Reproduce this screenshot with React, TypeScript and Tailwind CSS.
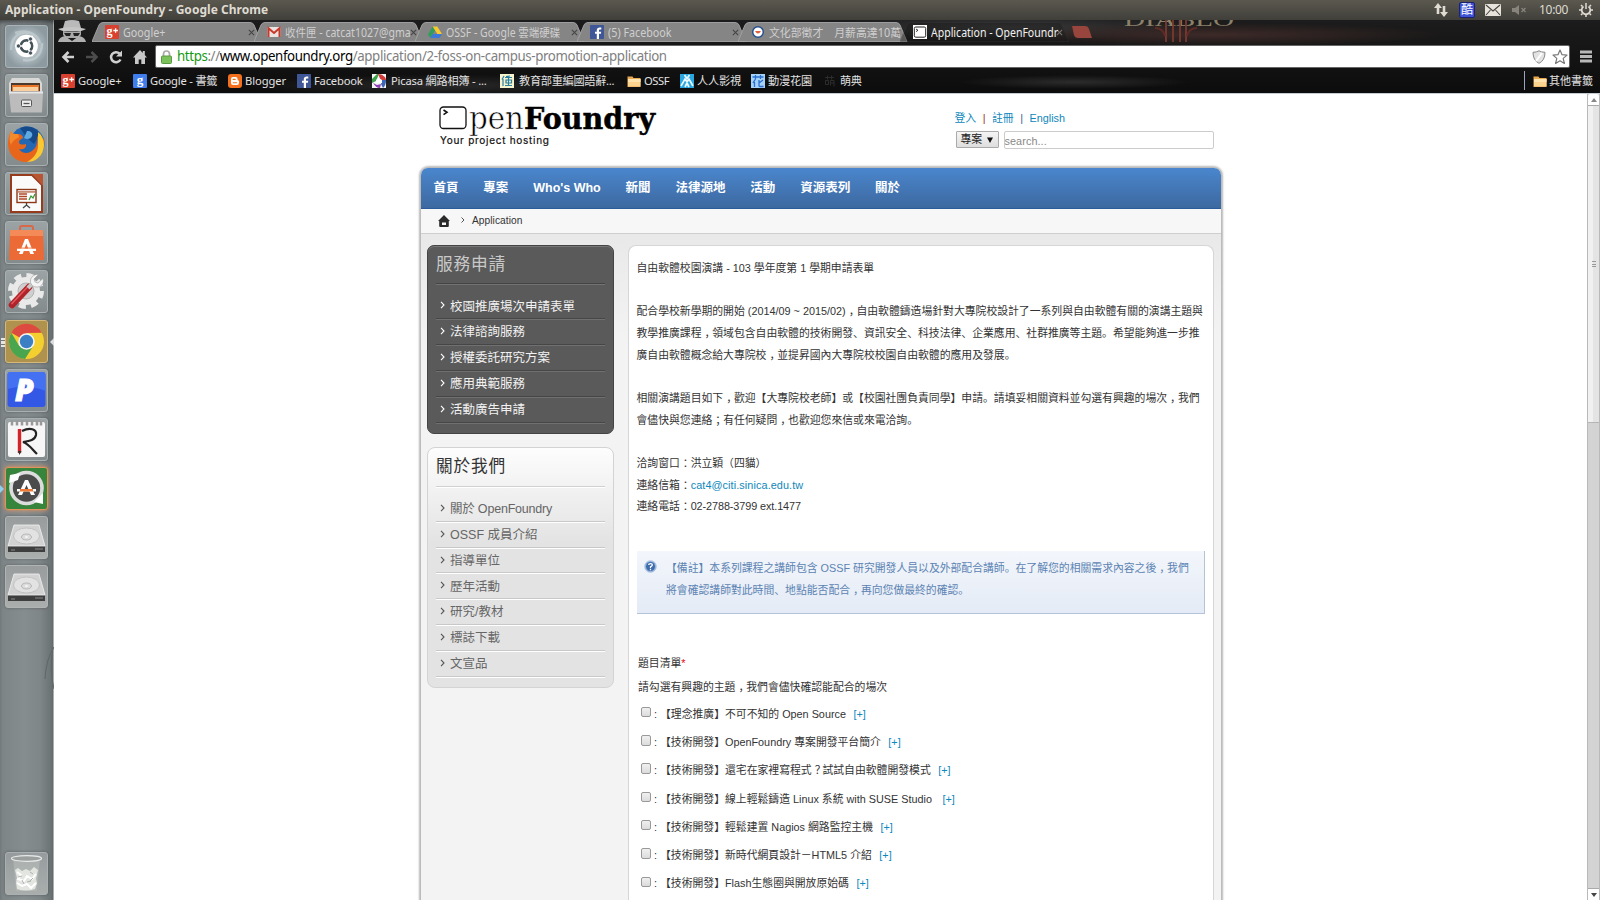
import React from "react";

const UI = "font-['Noto_Sans','Noto_Sans_CJK_SC',sans-serif]";

/* ---------- small favicons ---------- */
const GPlus = () => (
  <svg viewBox="0 0 14 14" className="size-[14px] shrink-0">
    <rect width="14" height="14" rx="1" fill="#d8412f" />
    <text x="1.4" y="10" fontSize="12" fontWeight="700" fill="#fff" fontFamily="Liberation Serif">g</text>
    <path d="M8.300 5.500h4.600M10.600 3.200v4.600" stroke="#fff" strokeWidth="1.3" />
  </svg>
);
const GBlue = () => (
  <svg viewBox="0 0 14 14" className="size-[14px] shrink-0">
    <rect width="14" height="14" rx="1" fill="#3f7ded" />
    <text x="3.8" y="10.2" fontSize="13" fontWeight="700" fill="#fff" fontFamily="Liberation Serif">g</text>
  </svg>
);
const BloggerIcon = () => (
  <svg viewBox="0 0 14 14" className="size-[14px] shrink-0">
    <rect width="14" height="14" rx="3" fill="#f4701c" />
    <path d="M5 3h2.6a2 2 0 0 1 2 2v.8c0 .5.3.6.8.7.5 0 .6.3.6.7V9a2 2 0 0 1-2 2H5a2 2 0 0 1-2-2V5a2 2 0 0 1 2-2z" fill="#fff" />
    <path d="M5.2 5.4h2M5.2 8.7h3.4" stroke="#f4701c" strokeWidth="1.1" strokeLinecap="round" />
  </svg>
);
const Fb = () => (
  <svg viewBox="0 0 14 14" className="size-[14px] shrink-0">
    <rect width="14" height="14" rx=".5" fill="#3f5797" />
    <path d="M9 14V8.8h1.9l.3-2.1H9V5.4c0-.7.3-1 1.1-1h1.2V2.5c-.3 0-.9-.1-1.6-.1C8 2.400 6.800 3.400 6.800 5.100v1.600H5v2.100h1.800V14z" fill="#fff" />
  </svg>
);
const Picasa = () => (
  <svg viewBox="0 0 14 14" className="size-[14px] shrink-0">
    <rect width="14" height="14" fill="#f5f5f5" />
    <path d="M0 5 5 0h2L4 7 0 9z" fill="#3da04b" />
    <path d="M6 0c4 0 8 3 8 6L9 7z" fill="#d33a3a" />
    <path d="M14 6c0 4-1 6-3 8l-2-4 1-4z" fill="#3d66b8" />
    <path d="M1 9c2 3 4 5 7 5l1-4-4 1z" fill="#8c3fb0" />
    <path d="M4 6 7 4l3 2v3H4z" fill="#fff" />
  </svg>
);
const EduIcon = () => (
  <svg viewBox="0 0 14 14" className="size-[14px] shrink-0">
    <rect width="14" height="14" fill="#f6f3cf" />
    <path d="M5 3.500h7M8.500 2v9.500M5 11.500h7M6 6h5.500v3H6zM4 2 2 5.500M3 5v7M10 2 6 2.500" stroke="#2b7fa0" strokeWidth="1.200" fill="none" />
  </svg>
);
const FolderIcon = () => (
  <svg viewBox="0 0 14 14" className="size-[14px] shrink-0">
    <path d="M.5 2.500h5l1 1.500h7v9H.5z" fill="#e9a750" />
    <path d="M1 5h12.500v7.500H1z" fill="#fbd38f" />
    <path d="M1 5h12.500v3H1z" fill="#ffe3ae" />
  </svg>
);
const RenRen = () => (
  <svg viewBox="0 0 14 14" className="size-[14px] shrink-0">
    <rect width="14" height="14" fill="#2aa7e0" />
    <path d="M4.500 1 7 4.500 9.500 1M1 12l4-7 2 3 2-3 4 7M5 13l2-4 2 4" stroke="#e9f8ff" strokeWidth="1.700" fill="none" />
  </svg>
);
const Flower = () => (
  <svg viewBox="0 0 14 14" className="size-[14px] shrink-0">
    <rect width="14" height="14" fill="#a5d2f8" />
    <path d="M1.500 3h11M4.500 1v4M9.500 1v4M4.500 5 2 9M3.500 8v5M8 6v5.500q0 1 1 1h3.500M12 6 8 9" stroke="#2a6fd0" strokeWidth="1.300" fill="none" />
  </svg>
);
const Moe = () => (
  <svg viewBox="0 0 14 14" className="size-[14px] shrink-0">
    <path d="M2 3.500h9M4.500 1.500v4M8.500 1.500v4M2.500 6.500h3v4h-3zM7.500 6.500H11v6M7.500 6.500v5M7.500 9H11" stroke="#2c2c2c" strokeWidth="1" fill="none" />
  </svg>
);
const Gmail = () => (
  <svg viewBox="0 0 14 14" className="size-[14px] shrink-0">
    <rect x=".5" y="2" width="13" height="10" rx="1" fill="#e9e4e2" />
    <path d="M1.500 12V3.200L7 8l5.500-4.800V12" stroke="#c9392b" strokeWidth="2" fill="none" />
  </svg>
);
const Drive = () => (
  <svg viewBox="0 0 14 14" className="size-[14px] shrink-0">
    <path d="M4.700 1.500 0 9.500l2.300 3.500L7 5.500z" fill="#2f9e5b" />
    <path d="M4.700 1.500h4.600L14 9H9.400z" fill="#f6c933" />
    <path d="M2.300 13 4.700 9H14l-2.500 4z" fill="#3b78d8" />
  </svg>
);
const Smile = () => (
  <svg viewBox="0 0 14 14" className="size-[14px] shrink-0">
    <circle cx="7" cy="7" r="5.300" fill="#fff" stroke="#254f8f" strokeWidth="1.500" />
    <path d="M4 6q3 5 6 0z" fill="#e2603c" />
  </svg>
);
const Term = () => (
  <svg viewBox="0 0 14 14" className="size-[14px] shrink-0">
    <rect width="14" height="14" fill="#fff" />
    <rect x="1.300" y="2" width="11.400" height="10.200" rx="1.500" fill="#fff" stroke="#222" strokeWidth="1" />
    <path d="M3 4l2 1.300L3 6.600" stroke="#222" fill="none" strokeWidth=".9" />
  </svg>
);

/* ---------- launcher ---------- */
function Tile({ children, tone }: { children: React.ReactNode; tone?: string }) {
  return (
    <div className={"relative flex size-[43px] shrink-0 items-center justify-center rounded-[3px] border shadow-[0_0_3px_rgba(0,0,0,.3)] " + (tone ?? "border-[#a9b0b2] bg-linear-to-b from-[#9ca3a5] to-[#848b8d]")}>
      {children}
    </div>
  );
}
const I = ({ children }: { children: React.ReactNode }) => (
  <svg viewBox="0 0 43 43" className="size-[43px] shrink-0">{children}</svg>
);
const Disk = () => (
  <Tile tone="border-[#b0b4b5] bg-linear-to-b from-[#989c9d] to-[#aaaead]">
    <I>
      <path d="M9 9h25l6 21H3z" fill="#d2d2d2" />
      <path d="M9 9h25l6 21H3z" fill="none" stroke="#f3f3f3" strokeWidth=".8" />
      <ellipse cx="21.500" cy="20" rx="13" ry="8" fill="#e2e2e2" stroke="#bbb" strokeWidth=".8" />
      <ellipse cx="21.500" cy="21" rx="5" ry="3" fill="#dcdcdc" stroke="#aaa" strokeWidth=".8" />
      <ellipse cx="21.500" cy="21" rx="1.500" ry="1" fill="#f5f5f5" />
      <path d="M3 30h37v6H3z" fill="#3e3e3e" />
      <path d="M3 30h37v1H3z" fill="#888" />
      <path d="M6 34h4M30 33h8" stroke="#888" strokeWidth="1" />
    </I>
  </Tile>
);

function Launcher() {
  return (
    <aside className="relative flex w-[54px] shrink-0 flex-col items-start gap-[6.1px] bg-[linear-gradient(90deg,#7d8486_0%,#868d8f_45%,#7f8688_75%,#666d6f_100%)] pt-[5px] pb-[5px] pl-[5px] shadow-[inset_0_4px_4px_-2px_rgba(0,0,0,.5),inset_-1px_0_0_#b5bbbd]">
      <Tile tone="border-[#a8b4b9] bg-[radial-gradient(circle,#c5d0d4_20%,#8d9ba1_75%)]">
        <I>
          <path d="M6 25C6 12 14 6 25 8M37 18c0 13-8 19-19 17M10 8c10-4 22 0 25 10" fill="none" stroke="#c9d4d7" strokeWidth="2.500" opacity=".6" />
          <circle cx="21.500" cy="21" r="11.300" fill="#fff" />
          <circle cx="21.500" cy="21" r="5.600" fill="none" stroke="#44525a" strokeWidth="2.700" />
          <path d="M21.500 21H10M21.500 21l6 10.200M21.500 21l6-10.200" stroke="#fff" strokeWidth="1.700" />
          <circle cx="21.500" cy="21" r="4.200" fill="#fff" />
          <g fill="#44525a" stroke="#fff" strokeWidth=".7">
            <circle cx="13.400" cy="21" r="2.100" /><circle cx="25.500" cy="14" r="2.100" /><circle cx="25.500" cy="28" r="2.100" />
          </g>
        </I>
      </Tile>
      <Tile>
        <I>
          <path d="M7 4h27l3 5v12H4V9z" fill="#d8d8d6" />
          <path d="M6 9h29v9H6z" fill="#4c3a2d" />
          <path d="M7 11h27v6H7z" fill="#e8752a" />
          <path d="M8 13h25v4H8z" fill="#f8cf9d" />
          <path d="M4 17.500h34l-1 21H6z" fill="#bcbcbc" />
          <path d="M4 17.500h34v2H4z" fill="#e6e6e6" />
          <rect x="16.500" y="26" width="10" height="6.500" rx="1" fill="#eee" stroke="#555" />
          <path d="M18.500 29.500h6" stroke="#555" strokeWidth="1.300" />
        </I>
      </Tile>
      <Tile>
        <I>
          <circle cx="22" cy="21" r="17.500" fill="#2468b4" />
          <path d="M15 5c8-4 17 0 20 6l-6 10-7-6z" fill="#154a8a" />
          <path d="M22 8c4 0 6 2 5 5s-5 4-8 2z" fill="#5fa8e0" />
          <path d="M6 8c1 3 3 3 7 3 3 0 5 2 5 4-2 1-4 2-4 4 0 3 4 3 7 2 1 4-3 6-7 5 3 5 10 5 14 1 4-3 5-9 4-14 3 3 4 6 4 8l3-6c2 12-6 24-18 24C10 39 3 31 3 21c0-5 1-9 3-13z" fill="#e8661b" />
          <path d="M33 9c8 6 8 20 0 26-3 3-8 4-11 4 7-4 11-9 11-17z" fill="#f9c933" />
          <path d="M6 8c-2 4-2 10 0 14 2-5 4-5 8-8l-1-3c-4 0-6 0-7-3z" fill="#f58a2b" />
        </I>
      </Tile>
      <Tile>
        <I>
          <path d="M6 3h21l10 10v27H6z" fill="#fafafa" stroke="#963c1c" strokeWidth="2" />
          <path d="M27 2h11v12z" fill="#b85533" />
          <rect x="12" y="17.500" width="19" height="13" fill="#fff" stroke="#8d3618" strokeWidth="1.400" />
          <path d="M13 19h17v1.800H13z" fill="#c98d77" />
          <path d="M14 22h8M14 24.500h8M14 27h8" stroke="#b0492a" strokeWidth="1.700" />
          <path d="M24 28l2-4 2 2 2-4" stroke="#3a9a3a" strokeWidth="1.300" fill="none" />
          <path d="M21.500 31v3M18 36l3.500-3 3.500 3" stroke="#444" strokeWidth="1.300" fill="none" />
        </I>
      </Tile>
      <Tile>
        <I>
          <path d="M15 12V7q0-2 2-2h9q2 0 2 2v5" fill="none" stroke="#d9684a" strokeWidth="2" />
          <path d="M5 9h33l1 29q0 1-1 1H5q-1 0-1-1z" fill="#ec6a35" />
          <path d="M5 9h33v6H5z" fill="#f48a58" />
          <path d="M14 33l6-15h3l6 15h-3.700l-4-10.500L17.700 33z" fill="#fff" />
          <path d="M12 27.500h19v2.500H12z" fill="#fff" />
          <path d="M12 26.600h19v.9H12z" fill="#ec6a35" />
        </I>
      </Tile>
      <Tile>
        <I>
          <circle cx="21" cy="21" r="14" fill="#e9e9e9" />
          <circle cx="21" cy="21" r="15.500" fill="none" stroke="#e9e9e9" strokeWidth="5" strokeDasharray="7 5.170" />
          <circle cx="21" cy="21" r="8" fill="#cfcfcf" stroke="#b3b3b3" />
          <path d="M7 35 24 17" stroke="#b1232a" strokeWidth="6.500" strokeLinecap="round" />
          <path d="M6.500 34 23 16.500" stroke="#e2595c" strokeWidth="1.500" />
          <path d="M23 18l6-6" stroke="#c9c9c9" strokeWidth="4" />
          <path d="M33.500 4.500 29 9l1 3 3 1 5-4.500c1.500 5-2 9-7 8.500-5-.5-6.500-5-5-8.500 1.500-3 4.500-4.500 7.500-4z" fill="#f4f4f4" stroke="#999" strokeWidth=".6" />
        </I>
      </Tile>
      <Tile tone="border-[#d6b878] bg-[#b0924f]">
        <I>
          <circle cx="21.500" cy="21.500" r="17.500" fill="#f4cf30" />
          <path d="M21.500 21.500 6.300 12.700A17.500 17.500 0 0 1 36.700 12.700L21.500 13z" fill="#dc4a40" />
          <path d="M6.300 12.700A17.500 17.500 0 0 0 20 39l8.500-13.500-14.400.300z" fill="#4aa54f" />
          <circle cx="21.500" cy="21.500" r="8.300" fill="#f5f5f5" />
          <circle cx="21.500" cy="21.500" r="6.700" fill="#3b7fc4" />
        </I>
        <span className="absolute -left-[5px] top-[17px] h-[9px] w-[4px] border-y-2 border-[#e5e5e5] bg-[linear-gradient(#777_28%,#e5e5e5_28%,#e5e5e5_70%,#777_70%)]" />
        <svg viewBox="0 0 4 8" className="absolute left-[43.500px] top-[17px] h-[8px] w-[4px]"><path d="M4 0v8L0 4z" fill="#ddd" /></svg>
      </Tile>
      <Tile>
        <I>
          <rect x="2.500" y="3" width="38" height="35" rx="3" fill="#3458e6" />
          <path d="M2.500 20q19-6 38 2V6q0-3-3-3h-32q-3 0-3 3z" fill="#4470f2" />
          <text x="10" y="31.500" fontSize="30" fontWeight="800" fontStyle="italic" fill="#fff" fontFamily="Open Sans" stroke="#fff" strokeWidth="1">P</text>
        </I>
      </Tile>
      <Tile>
        <I>
          <rect x="3" y="4" width="37" height="35" rx="2" fill="#f6f6f6" />
          <path d="M7 2.500v5M12 2.500v5M17 2.500v5M22 2.500v5M27 2.500v5M32 2.500v5M36 2.500v5" stroke="#999" strokeWidth="2.500" />
          <path d="M17 13c8-4 15-2 14 4-1 5-6 6-13 7 6 2 9 7 14 12" fill="none" stroke="#222" strokeWidth="2.200" />
          <path d="M14.500 11v24" stroke="#d3222a" strokeWidth="3.400" /><path d="M13 33h3.500l-2 4z" fill="#333" />
        </I>
      </Tile>
      <Tile tone="border-[#e0935c] bg-[#37853c] shadow-[0_0_4px_#f0935a]">
        <I>
          <circle cx="21.500" cy="21" r="15.500" fill="#4b4b4b" stroke="#dcdcdc" strokeWidth="3.600" />
          <path d="M13 28l7-15h3l7 15h-4l-4.500-10L17 28z" fill="#fff" />
          <path d="M12 22h19v2.500H12z" fill="#fff" /><path d="M15 22h13v2.500H15z" fill="#ee7a36" />
          <path d="M5 8l10-2-2 7-9 3zM38 26v11l-9-2z" fill="#fff" />
        </I>
        <svg viewBox="0 0 4 8" className="absolute -left-[6px] top-[17px] h-[8px] w-[4px]"><path d="M0 0v8l4-4z" fill="#8fd0ef" /></svg>
      </Tile>
      <Disk />
      <Disk />
      <div className="flex-1" />
      <Tile tone="border-[#a9b0b2] bg-linear-to-b from-[#969c9d] to-[#a9aead]">
        <I>
          <path d="M8 6h27l-3 33H11z" fill="#b3b8b6" opacity=".75" />
          <ellipse cx="21.500" cy="6.500" rx="15" ry="2.800" fill="#9ba09e" stroke="#e7eae8" strokeWidth="1.200" />
          <path d="M10 18l3-2 4 3 4-2 4 2 4-4 4 3-2 9 1 4-2 6q-9 3-18 0l-1-7 1-4z" fill="#e3e5e1" />
          <path d="M12 20l4 3-3 4 6 2 3-5 5 3 4-5M12 31l5 3 5-2 4 4 5-5" stroke="#fff" strokeWidth="2" fill="none" />
          <path d="M13 25l4-1M22 30l4-1M25 20l3 2M17 28l2 4M28 26l-3 3" stroke="#aeb2ad" fill="none" />
        </I>
      </Tile>
      <svg viewBox="0 0 10 60" className="absolute right-0 top-[625px] h-[60px] w-[10px]"><path d="M10 2Q2 14 1 34M9 2q-4 22 1 42" fill="none" stroke="#5e6668" strokeWidth="1" /></svg>
    </aside>
  );
}

/* ---------- browser chrome ---------- */
const tabs = [
  { icon: <GPlus />, text: "Google+", cls: "scale-x-[.92]" },
  { icon: <Gmail />, text: "收件匣 - catcat1027@gma", cls: "scale-x-[.9]" },
  { icon: <Drive />, text: "OSSF - Google 雲端硬碟", cls: "scale-x-[.9]" },
  { icon: <Fb />, text: "(5) Facebook", cls: "scale-x-[.92]" },
  { icon: <Smile />, text: "文化部徵才　月薪高達10萬", cls: "scale-x-[.93]" },
  { icon: <Term />, text: "Application - OpenFoundr", cls: "scale-x-[.9]" },
];

function TabStrip() {
  return (
    <div className="flex h-[22px] items-start pl-[4px]">
      <svg viewBox="0 0 28 22" className="h-[22px] w-[28px] shrink-0">
        <path d="M7 1q7-2 14 0l2 7H5z" fill="#b9b9b9" />
        <path d="M0 9q14-4 28 0-3 2.500-14 2.500T0 9z" fill="#c5c5c5" />
        <path d="M5 11q9 2 18 0v4l-3 3H8l-3-3z" fill="#aaa" />
        <path d="M6 13h7l-1 3H8zM15 13h7l-2 3h-4z" fill="#222" />
        <path d="M0 22q1-5 7-6l7 5 7-5q6 1 7 6z" fill="#b0b0b0" />
      </svg>
      <div className="flex pl-[7px]">
        {tabs.map((t, i) => (
          <div key={i} className="relative flex h-[22px] w-[161.600px] shrink-0 items-center pl-[12px]">
            <svg viewBox="0 0 173 20" preserveAspectRatio="none" className={i === 5 ? "absolute -left-[1px] top-[2px] h-[20px] w-[173px] opacity-40" : "absolute -left-[1px] top-[2px] h-[20px] w-[173px]"}>
              <path d="M0 19.500 7 3Q8 .5 11 .5H158q3 0 4 2.500l7 16.500z" fill={i === 5 ? "#1a1a1a" : "#858585"} stroke={i === 5 ? "#333" : "#a5a5a5"} strokeWidth=".9" />
            </svg>
            <div className="relative flex min-w-0 flex-1 items-center gap-[4px] pt-[2px]">
              {t.icon}
              <span className={"h-[18px] w-[122px] whitespace-nowrap text-[11.700px] leading-[18px]" + (i === 5 ? " text-[#f2f2f2]" : " text-[#cfcfcf]")}>
                <span className={"inline-block origin-left " + t.cls}>{t.text}</span>
              </span>
              <svg viewBox="0 0 8 8" className="-ml-[1px] size-[7px] shrink-0"><path d="M1 1l6 6M7 1 1 7" stroke={i === 5 ? "#777" : "#444"} strokeWidth="1.200" /></svg>
            </div>
          </div>
        ))}
      </div>
      <svg viewBox="0 0 190 22" className="h-[22px] w-[190px] shrink-0">
        <path d="M12 6h13q3 0 4 3l3 9H18q-3 0-4-3z" transform="translate(-3 0)" fill="#98453d" />
        <text x="61" y="5.500" fontSize="19" fontFamily="Liberation Serif" fill="#8c8069" textLength="110" lengthAdjust="spacingAndGlyphs">DIABLO</text>
        <path d="M103 0v22M110 0v22M117 0v22M123 0v22" stroke="#7d3b32" strokeWidth="1.700" />
        <path d="M92 8q8 0 10 8M134 8q-8 0-10 8" stroke="#5d2a26" strokeWidth="2" fill="none" />
      </svg>
    </div>
  );
}

const marks = [
  { icon: <GPlus />, t: "Google+", w: "w-[72px]", c: "tracking-[-.1px]" },
  { icon: <GBlue />, t: "Google - 書籤", w: "w-[95px]", c: "tracking-[-.2px]" },
  { icon: <BloggerIcon />, t: "Blogger", w: "w-[69px]", c: "tracking-[-.1px]" },
  { icon: <Fb />, t: "Facebook", w: "w-[75px]", c: "tracking-[-.2px]" },
  { icon: <Picasa />, t: "Picasa 網路相簿 - ...", w: "w-[128px]", c: "pl-[2px] tracking-[-.2px]" },
  { icon: <EduIcon />, t: "教育部重編國語辭...", w: "w-[127px]", c: "pl-[2px] tracking-[-.3px]" },
  { icon: <FolderIcon />, t: "OSSF", w: "w-[53px]", c: "tracking-[-.4px]" },
  { icon: <RenRen />, t: "人人影視", w: "w-[71px]", c: "tracking-[-.2px]" },
  { icon: <Flower />, t: "動漫花園", w: "w-[72px]", c: "tracking-[-.2px]" },
  { icon: <Moe />, t: "萌典", w: "w-[60px]", c: "tracking-[-.4px]" },
];

function Browser() {
  return (
    <header className="flex h-[74px] shrink-0 flex-col overflow-hidden border-b border-[#c3ccd3] bg-[radial-gradient(ellipse_at_75%_20%,#3d2a28_0%,transparent_14%),radial-gradient(ellipse_at_62%_10%,#3a3a3a_0%,transparent_14%),radial-gradient(ellipse_at_66%_85%,#2c2c2c_0%,transparent_8%),radial-gradient(ellipse_at_25%_90%,#2a2a2a_0%,transparent_12%),linear-gradient(#1d1c1c,#0c0c0c)]">
      <TabStrip />
      <div className="flex h-[29px] shrink-0 items-center">
        <div className="flex w-[101px] items-center gap-[10px] pl-[7px] pt-[1px]">
          <svg viewBox="0 0 14 14" className="size-[14px]"><path d="M13 7H3M7.500 2 2.500 7l5 5" stroke="#d0d0d0" strokeWidth="2.600" fill="none" /></svg>
          <svg viewBox="0 0 14 14" className="size-[14px]"><path d="M1 7h10M6.500 2l5 5-5 5" stroke="#4c4c4c" strokeWidth="2.600" fill="none" /></svg>
          <svg viewBox="0 0 14 14" className="size-[14px]"><path d="M11.500 9.500A5 5 0 1 1 10.500 3.500" stroke="#d0d0d0" strokeWidth="2.500" fill="none" /><path d="M13 .5V6.500H7z" fill="#d0d0d0" /></svg>
          <svg viewBox="0 0 14 14" className="size-[14px]"><path d="M7 0 0 7.500h2V14h3.700V9.500h2.600V14H12V7.500h2L11.800 5V1H9.800v2z" fill="#c8c8c8" /></svg>
        </div>
        <div className="flex h-[23px] w-[1415px] items-center rounded-[2px] border border-[#666] bg-white px-[5px]">
          <svg viewBox="0 0 11 14" className="h-[14px] w-[11px]"><path d="M2.500 7V4a3 3 0 0 1 6 0v3" stroke="#aaa" strokeWidth="1.700" fill="none" /><rect x=".5" y="6" width="10" height="7.500" rx="1" fill="#7cc25b" stroke="#5a9a42" /></svg>
          <span className="mb-[2px] ml-[5px] inline-block origin-left scale-x-[.916] text-[14.500px] leading-[21px] tracking-[-.42px] text-[#808080]"><span className="text-[#159a15]">https</span>://<span className="text-black">www.openfoundry.org</span>/application/2-foss-on-campus-promotion-application</span>
          <div className="ml-auto flex items-center gap-[6px]">
            <svg viewBox="0 0 14 14" className="size-[14px]"><path d="M7 .8Q9.500 2.300 13 2.300 13 10.500 7 13.300 1 10.500 1 2.300 4.500 2.300 7 .8z" fill="#e3e3e3" stroke="#888" /><path d="M10 3 4 11" stroke="#fff" strokeWidth="2" /></svg>
            <svg viewBox="0 0 16 16" className="-mr-[4px] size-[16px]"><path d="M8 1l2 4.700 5 .4-3.800 3.300L12.400 14.500 8 11.800 3.600 14.500 4.800 9.400 1 6.100l5-.4z" fill="#fff" stroke="#777" strokeWidth="1.200" strokeLinejoin="round" /></svg>
          </div>
        </div>
        <svg viewBox="0 0 12 13" className="ml-[10px] h-[13px] w-[12px]"><path d="M0 2h12M0 6.500h12M0 11h12" stroke="#b8b8b8" strokeWidth="3" /></svg>
      </div>
      <div className="flex h-[19px] items-center pl-[7px]">
        {marks.map((m, i) => (
          <div key={i} className={"flex shrink-0 items-center gap-[3px] whitespace-nowrap " + m.w}>
            {m.icon}
            <span className={"text-[11.200px] leading-[18px] text-[#e2e2e2] " + m.c}>{m.t}</span>
          </div>
        ))}
        <div className="ml-auto flex h-[19px] w-[76px] items-center gap-[2px] border-l border-[#9aa3c4] pl-[8px]">
          <FolderIcon />
          <span className="whitespace-nowrap text-[11px] leading-[18px] text-[#e2e2e2]">其他書籤</span>
        </div>
      </div>
    </header>
  );
}

function TopBar() {
  return (
    <div className="flex h-[20px] shrink-0 items-center bg-linear-to-b from-[#5b594f] to-[#403f3a] px-[5px]">
      <span className="text-[12px] font-bold leading-[20px] tracking-[.03px] text-[#dfdbd2] [font-family:'Noto_Sans',sans-serif]">Application - OpenFoundry - Google Chrome</span>
      <div className="ml-auto flex items-center pr-[2px]">
        <svg viewBox="0 0 14 14" className="mr-[11px] size-[14px]"><path d="M4 0 8 5H5.300v6H2.700V5H0zM10 14 6 9h2.700V3h2.600v6H14z" fill="#dfdbd2" /></svg>
        <span className="mr-[10px] flex size-[16px] items-center justify-center rounded-[2px] border border-[#1b2070] bg-[#3d52d5] text-[12px] leading-none text-white">酷</span>
        <svg viewBox="0 0 16 12" className="mr-[11px] h-[12px] w-[16px]"><rect width="16" height="12" rx="1" fill="#e8e4dc" /><path d="M1 1l7 6 7-6M1 11l4.500-5M15 11l-4.500-5" stroke="#45443e" fill="none" strokeWidth="1.100" /></svg>
        <svg viewBox="0 0 15 12" className="mr-[12px] h-[12px] w-[15px]"><path d="M0 4h3l4-3v10L3 8H0z" fill="#86847b" /><path d="M9.500 4l4 4M13.500 4l-4 4" stroke="#86847b" strokeWidth="1.300" /></svg>
        <span className="mr-[10px] w-[30px] text-[12px] leading-[20px] tracking-[-.3px] text-[#dfdbd2]">10:00</span>
        <svg viewBox="0 0 14 14" className="size-[14px]">
          <path d="M4.500 3.500a4.300 4.300 0 1 0 5 0" fill="none" stroke="#dfdbd2" strokeWidth="1.700" />
          <path d="M7 0v6M0 7h2M12 7h2M2 2l1.500 1.500M12 2l-1.500 1.500M2 12l1.500-1.500M12 12l-1.500-1.500M7 12v2" stroke="#dfdbd2" strokeWidth="1.500" />
        </svg>
      </div>
    </div>
  );
}

/* ---------- page ---------- */
const Chevron = ({ c }: { c: string }) => (
  <svg viewBox="0 0 5 8" className="mb-[3px] h-[8px] w-[5px] shrink-0"><path d="M1 .8 4 4 1 7.200" fill="none" stroke={c} strokeWidth="1.100" /></svg>
);

/* Centres full-width pause marks horizontally within their cell. */
function Zh({ text }: { text: string }) {
  return (
    <>
      {text.split(/([，：；？])/).map((p, i) =>
        i % 2 ? <span key={i} className="-mr-[3px] pl-[3px]">{p}</span> : p
      )}
    </>
  );
}

function DarkMenu() {
  const items = ["校園推廣場次申請表單", "法律諮詢服務", "授權委託研究方案", "應用典範服務", "活動廣告申請"];
  return (
    <section className="h-[189px] rounded-[7px] border-[1.500px] border-[#444] bg-[#5a5a5a] px-[8px] shadow-[inset_0_1px_0_#777]">
      <h3 className="flex h-[38.500px] items-center border-b border-[#444] text-[16.670px] tracking-[.85px] text-[#c9c9c9] shadow-[0_1px_0_#737373]">服務申請</h3>
      <ul className="pt-[9.500px]">
        {items.map((t) => (
          <li key={t} className="flex h-[25.830px] items-center gap-[5px] border-b border-[#464646] pl-[4px] pt-[2px] text-[12.500px] text-[#f2f2f2] shadow-[0_1px_0_#707070]">
            <Chevron c="#fff" />{t}
          </li>
        ))}
      </ul>
    </section>
  );
}
function LightMenu() {
  const items = ["關於 OpenFoundry", "OSSF 成員介紹", "指導單位", "歷年活動", "研究/教材", "標誌下載", "文宣品"];
  return (
    <section className="mt-[13px] h-[241px] rounded-[8px] border-[1.500px] border-[#d3d3d3] bg-[linear-gradient(#fdfdfd,#e3e3e3_95px)] px-[8px]">
      <h3 className="flex h-[39px] items-center border-b border-[#d0d0d0] text-[16.670px] tracking-[.85px] text-[#333] shadow-[0_1px_0_#fff]">關於我們</h3>
      <ul className="pt-[9.500px]">
        {items.map((t, i) => (
          <li key={t} className={"flex h-[25.830px] items-center gap-[5px] border-b border-[#c8c8c8] pl-[4px] pt-[2px] text-[12.500px] text-[#666] shadow-[0_1px_0_#fff]" + (i === 0 ? " tracking-[-.2px]" : "")}>
            <Chevron c="#555" />{t}
          </li>
        ))}
      </ul>
    </section>
  );
}

const topics = [
  "【理念推廣】不可不知的 Open Source",
  "【技術開發】OpenFoundry 專案開發平台簡介",
  "【技術開發】還宅在家裡寫程式？試試自由軟體開發模式",
  "【技術開發】線上輕鬆鑄造 Linux 系統 with SUSE Studio\u00a0",
  "【技術開發】輕鬆建置 Nagios 網路監控主機",
  "【技術開發】新時代網頁設計－HTML5 介紹",
  "【技術開發】Flash生態圈與開放原始碼",
];

function Content() {
  const lines = [
    "自由軟體校園演講 - 103 學年度第 1 學期申請表單",
    "",
    "配合學校新學期的開始 (2014/09 ~ 2015/02)，自由軟體鑄造場針對大專院校設計了一系列與自由軟體有關的演講主題與",
    "教學推廣課程，領域包含自由軟體的技術開發、資訊安全、科技法律、企業應用、社群推廣等主題。希望能夠進一步推",
    "廣自由軟體概念給大專院校，並提昇國內大專院校校園自由軟體的應用及發展。",
    "",
    "相關演講題目如下，歡迎【大專院校老師】或【校園社團負責同學】申請。請填妥相關資料並勾選有興趣的場次，我們",
    "會儘快與您連絡；有任何疑問，也歡迎您來信或來電洽詢。",
    "",
    "洽詢窗口：洪立穎（四貓）",
  ];
  return (
    <main className="w-[586px] shrink-0 rounded-t-[8px] border border-b-0 border-[#d6d6d6] bg-white px-[8px] pt-[12.500px] text-[10.830px] leading-[21.670px] text-[#333]">
      {lines.map((l, i) => (
        <p key={i} className="h-[21.670px] whitespace-nowrap"><Zh text={l} /></p>
      ))}
      <p className="h-[21.670px]"><Zh text="連絡信箱：" /><a className="tracking-[.1px] text-[#0e87bb]">cat4@citi.sinica.edu.tw</a></p>
      <p className="h-[21.670px]"><Zh text="連絡電話：" /><span className="tracking-[-.08px]">02-2788-3799 ext.1477</span></p>
      <div className="mt-[33.500px] flex h-[63px] w-[568px] border-r border-b border-[#b5c3d8] bg-linear-to-b from-[#f3f6fb] to-[#e4ebf6] pt-[7px] pl-[7.500px] text-[#5c83b3]">
        <svg viewBox="0 0 14 14" className="mt-[2px] size-[13px] shrink-0">
          <circle cx="7" cy="7" r="6.300" fill="#8fb0dc" stroke="#b5c8e4" />
          <circle cx="7" cy="7" r="4.800" fill="#3e6cab" />
          <path d="M5 5.500Q5 3.800 7 3.800T9 5.400Q9 6.500 7 7.300V8.500M7 9.500V11" stroke="#fff" strokeWidth="1.400" fill="none" />
        </svg>
        <div className="whitespace-nowrap pl-[9px]">
          <p><Zh text="【備註】本系列課程之講師包含 OSSF 研究開發人員以及外部配合講師。在了解您的相關需求內容之後，我們" /></p>
          <p><Zh text="將會確認講師對此時間、地點能否配合，再向您做最終的確認。" /></p>
        </div>
      </div>
      <div className="pt-[39px] pl-[1.500px]">
        <p className="h-[23.500px]">題目清單<span className="text-red-600">*</span></p>
        <p className="h-[23.500px]"><Zh text="請勾選有興趣的主題，我們會儘快確認能配合的場次" /></p>
        <ul>
          {topics.map((t) => (
            <li key={t} className="flex h-[28.300px] items-center pl-[2.500px]">
              <span className="mb-[5px] mr-[3px] size-[10.500px] rounded-[2px] border border-[#999] bg-linear-to-b from-[#f0f0f0] to-[#dcdcdc]" />
              <span className="whitespace-pre">: <Zh text={t} /></span><a className="pl-[7.500px] text-[#0e87bb]">[+]</a>
            </li>
          ))}
        </ul>
      </div>
    </main>
  );
}

function Page() {
  const nav = ["首頁", "專案", "Who's Who", "新聞", "法律源地", "活動", "資源表列", "關於"];
  return (
    <div className="flex min-h-0 flex-1 bg-white font-['Liberation_Sans','Noto_Sans_CJK_SC',sans-serif]">
      <div className="flex min-w-0 flex-1 flex-col overflow-hidden pl-[366.500px]">
        <div className="flex h-[73.500px] w-[800px] shrink-0 justify-between pl-[18px] pt-[11px]">
          <svg viewBox="0 0 220 42" className="h-[42px] w-[220px]">
            <rect x="1" y="2" width="26" height="21.500" rx="3.500" fill="none" stroke="#111" strokeWidth="1.300" />
            <path d="M4.500 5 8 7.300 4.500 9.600" fill="none" stroke="#111" strokeWidth="1.600" />
            <text x="30" y="24" fontSize="31" fontFamily="DejaVu Serif" textLength="55" lengthAdjust="spacingAndGlyphs" fill="#000" stroke="#fff" strokeWidth=".6">pen</text>
            <text x="85" y="24" fontSize="30.500" fontWeight="700" fontFamily="DejaVu Serif" textLength="131" lengthAdjust="spacingAndGlyphs" fill="#000" stroke="#000" strokeWidth=".5">Foundry</text>
            <text x="1" y="38.500" fontSize="10" fontFamily="Inter" textLength="109" fill="#111" stroke="#111" strokeWidth=".2">Your project hosting</text>
          </svg>
          <div className="w-[266px] pt-[3px] text-[10.830px] text-[#0e87bb]">
            <div className="flex h-[20px] items-center gap-[6.500px]">
              <a>登入</a><span className="text-[#9a3322]">|</span><a>註冊</a><span className="text-[#34608e]">|</span><a>English</a>
            </div>
            <div className="flex gap-[5px] pt-[3px] pl-[1px]">
              <div className="flex h-[17px] w-[43px] items-center justify-between rounded-[1px] border border-[#aaa] bg-linear-to-b from-[#f5f5f5] to-[#dedede] pl-[4px] pr-[5px] text-[#222]">
                專案<svg viewBox="0 0 6 6" className="size-[6px]"><path d="M0 .5h6L3 6z" fill="#111" /></svg>
              </div>
              <div className="flex h-[18px] w-[210px] items-center rounded-[2px] border border-[#ccc] bg-white pt-[2px] tracking-[.08px] text-[#888]">search...</div>
            </div>
          </div>
        </div>
        <div className="flex min-h-0 w-[800px] flex-1 flex-col rounded-t-[8px] bg-[linear-gradient(#e8e8e8_60px,#f3f3f3_170px)] shadow-[0_0_2px_1.500px_#b9b9b9]">
          <nav className="flex h-[41.500px] shrink-0 items-center gap-[24.850px] rounded-t-[7px] border-b border-[#2b5c99] bg-linear-to-b from-[#4a86cd] to-[#3d69a0] pl-[13px] pt-[2px] text-[12.500px] font-bold text-white">
            {nav.map((n) => <a key={n}>{n}</a>)}
          </nav>
          <div className="flex h-[24.500px] shrink-0 items-center border-b border-[#cfcfcf] bg-[#f7f7f7] pl-[17.500px] text-[10.200px] text-[#333]">
            <svg viewBox="0 0 12 12" className="mr-[11px] size-[12px]"><path d="M6 0 0 6h1.200v5q0 1 1 1h7.600q1 0 1-1V6H12z" fill="#2a2a2a" /><path d="M4 7.500h4V10H4z" fill="#f7f7f7" /></svg>
            <svg viewBox="0 0 4 6" className="mr-[7px] mb-[1px] h-[6px] w-[4px]"><path d="M.5.500 3 3 .5 5.500" fill="none" stroke="#555" /></svg>
            <span className="tracking-[.05px]">Application</span>
          </div>
          <div className="flex min-h-0 flex-1 items-stretch gap-[13.500px] pl-[6.500px] pt-[11px]">
            <div className="w-[187px] shrink-0"><DarkMenu /><LightMenu /></div>
            <Content />
          </div>
        </div>
      </div>
      <div className="flex w-[13px] shrink-0 flex-col border-x border-[#b9b9b9] bg-[#d3d3d3]">
        <div className="flex h-[12px] shrink-0 items-center justify-center rounded-t-[2px] border-b border-[#aaa] bg-white"><svg viewBox="0 0 6 4" className="h-[4px] w-[6px]"><path d="M3 0 6 4H0z" fill="#888" /></svg></div>
        <div className="flex h-[317px] shrink-0 flex-col items-center justify-center gap-[1.500px] border-b border-[#b5b5b5] bg-[linear-gradient(90deg,#f1f1f1_50%,#e4e4e4_50%)]">
          <i className="h-px w-[4px] bg-[#999]" /><i className="h-px w-[4px] bg-[#999]" /><i className="h-px w-[4px] bg-[#999]" />
        </div>
        <div className="mt-auto flex h-[12px] shrink-0 items-center justify-center border-t border-[#aaa] bg-white"><svg viewBox="0 0 6 4" className="h-[4px] w-[6px]"><path d="M0 0h6L3 4z" fill="#444" /></svg></div>
      </div>
    </div>
  );
}

export default function App() {
  return (
    <div className={"flex h-[900px] w-[1600px] flex-col overflow-hidden bg-white " + UI}>
      <TopBar />
      <div className="flex min-h-0 flex-1">
        <Launcher />
        <div className="flex min-w-0 flex-1 flex-col">
          <Browser />
          <Page />
        </div>
      </div>
    </div>
  );
}
